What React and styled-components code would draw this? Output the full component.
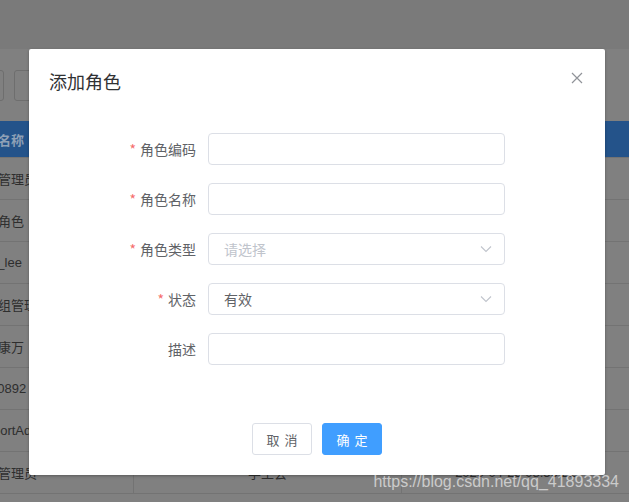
import React from "react";
import styled, { createGlobalStyle } from "styled-components";

const Global = createGlobalStyle`
  html, body { margin: 0; padding: 0; }
  body {
    width: 629px;
    height: 502px;
    overflow: hidden;
    font-family: "Helvetica Neue", "Liberation Sans", "Noto Sans CJK SC", sans-serif;
  }
  * { box-sizing: border-box; }
`;

/* ---------- dimmed page behind the dialog ---------- */
const Page = styled.div`
  position: relative;
  width: 629px;
  height: 502px;
  overflow: hidden;
  background: #808080;
`;

const TopBand = styled.div`
  height: 49px;
  background: #7a7a7a;
`;

const Toolbar = styled.div`
  display: flex;
  gap: 10px;
  margin: 21px 0 0 -60px;
  height: 31px;
`;

const GhostButton = styled.div`
  width: 64px;
  height: 31px;
  border: 1px solid #6e6e6e;
  border-radius: 3px;
`;

const Table = styled.div`
  margin: 20px 0 0 -40px;
  width: 669px;
  font-size: 13px;
`;

const Row = styled.div`
  display: grid;
  grid-template-columns: 174px 268px 1fr;
  height: ${(p) => (p.$head ? "37px" : "42px")};
  background: ${(p) => (p.$head ? "#24538a" : "transparent")};
  border-bottom: 1px solid #737373;
  color: ${(p) => (p.$head ? "#8fa0b6" : "#2e2e2e")};
  font-weight: ${(p) => (p.$head ? 700 : 400)};
`;

const Cell = styled.div`
  display: flex;
  align-items: center;
  justify-content: ${(p) => (p.$center ? "center" : "flex-start")};
  padding-left: ${(p) => (p.$center ? "0" : "12px")};
  white-space: nowrap;
  overflow: hidden;
  border-right: ${(p) => (p.$line ? "1px solid #737373" : "none")};
`;

const rows = [
  ["超级管理员", "系统管理", "2020-04-21 15:23:46"],
  ["普通角色", "普通用户", "2020-04-21 15:25:10"],
  ["user_lee", "测试组", "2020-04-22 09:12:33"],
  ["项目组管理员", "项目组", "2020-04-22 10:41:05"],
  ["王小康万", "财务部", "2020-04-23 14:08:52"],
  ["user0892", "测试组", "2020-04-23 16:30:19"],
  ["supportAdmin", "运维部", "2020-04-24 11:02:47"],
  ["超级管理员", "学生会", "2020-04-25 08:56:21"],
];

/* ---------- dialog ---------- */
const Mask = styled.div`
  position: absolute;
  inset: 0;
  display: flex;
  align-items: flex-start;
`;

const Dialog = styled.div`
  position: relative;
  margin: 49px 0 0 29px;
  width: 576px;
  background: #fff;
  border-radius: 2px;
  box-shadow: 0 1px 3px rgba(0, 0, 0, 0.3);
`;

const Header = styled.div`
  padding: 20px 20px 10px;
`;

const Title = styled.span`
  font-size: 18px;
  line-height: 24px;
  color: #303133;
  font-family: "Noto Sans CJK SC", sans-serif;
`;

const Close = styled.button`
  position: absolute;
  top: 21px;
  right: 20px;
  width: 16px;
  height: 16px;
  padding: 0;
  border: none;
  background: transparent;
  display: flex;
  align-items: center;
  justify-content: center;
`;

const Body = styled.div`
  padding: 30px 20px;
`;

const Form = styled.div`
  margin-left: 59px;
  width: 397px;
  display: flex;
  flex-direction: column;
`;

const Item = styled.div`
  display: grid;
  grid-template-columns: 100px 297px;
  height: 32px;
  margin-bottom: 18px;
`;

const Label = styled.label`
  text-align: right;
  padding-right: 12px;
  font-size: 14px;
  line-height: 32px;
  color: #606266;
  font-family: "Noto Sans CJK SC", sans-serif;
  white-space: nowrap;
`;

const Star = styled.span`
  color: #f56c6c;
  margin-right: 4px;
`;

const Field = styled.div`
  display: flex;
  align-items: center;
  justify-content: space-between;
  height: 32px;
  padding: 0 12px 0 15px;
  border: 1px solid #dcdfe6;
  border-radius: 4px;
  background: #fff;
  font-size: 14px;
  color: ${(p) => (p.$placeholder ? "#c0c4cc" : "#606266")};
  font-family: "Noto Sans CJK SC", sans-serif;
`;

const Footer = styled.div`
  padding: 10px 20px 20px;
  display: flex;
  justify-content: center;
  gap: 10px;
`;

const Btn = styled.button`
  width: 60px;
  height: 32px;
  padding: 0;
  border-radius: 3px;
  font-size: 13px;
  word-spacing: 2px;
  font-family: "Noto Sans CJK SC", sans-serif;
  border: 1px solid ${(p) => (p.$primary ? "#409eff" : "#dcdfe6")};
  background: ${(p) => (p.$primary ? "#409eff" : "#fff")};
  color: ${(p) => (p.$primary ? "#fff" : "#606266")};
`;

const Watermark = styled.div`
  position: absolute;
  right: 10px;
  bottom: 11px;
  font-family: "Liberation Sans", Arial, sans-serif;
  font-size: 16px;
  line-height: 18px;
  color: rgba(255, 255, 255, 0.6);
`;

const Chevron = () => (
  <svg width="12" height="8" viewBox="0 0 12 8">
    <polyline points="1,1.5 6,6.5 11,1.5" fill="none" stroke="#c0c4cc" strokeWidth="1.1" />
  </svg>
);

const fields = [
  { label: "角色编码", req: true },
  { label: "角色名称", req: true },
  { label: "角色类型", req: true, select: true, placeholder: "请选择" },
  { label: "状态", req: true, select: true, value: "有效" },
  { label: "描述" },
];

export default function App() {
  return (
    <>
      <Global />
      <Page>
        <TopBand />
        <Toolbar>
          <GhostButton />
          <GhostButton />
        </Toolbar>
        <Table>
          <Row $head>
            <Cell>角色名称</Cell>
            <Cell $center>所属组织</Cell>
            <Cell $center>创建时间</Cell>
          </Row>
          {rows.map((r, i) => (
            <Row key={i}>
              <Cell $line>{r[0]}</Cell>
              <Cell $line $center>{r[1]}</Cell>
              <Cell $center>{r[2]}</Cell>
            </Row>
          ))}
        </Table>

        <Mask>
          <Dialog>
            <Header>
              <Title>添加角色</Title>
              <Close aria-label="关闭">
                <svg width="12" height="12" viewBox="0 0 12 12">
                  <path d="M1 1 L11 11 M11 1 L1 11" stroke="#909399" strokeWidth="1.2" />
                </svg>
              </Close>
            </Header>
            <Body>
              <Form>
                {fields.map((f) => (
                  <Item key={f.label}>
                    <Label>
                      {f.req && <Star>*</Star>}
                      {f.label}
                    </Label>
                    <Field $placeholder={!!f.placeholder}>
                      <span>{f.placeholder || f.value || ""}</span>
                      {f.select && <Chevron />}
                    </Field>
                  </Item>
                ))}
              </Form>
            </Body>
            <Footer>
              <Btn>取 消</Btn>
              <Btn $primary>确 定</Btn>
            </Footer>
          </Dialog>
        </Mask>

        <Watermark>https://blog.csdn.net/qq_41893334</Watermark>
      </Page>
    </>
  );
}
